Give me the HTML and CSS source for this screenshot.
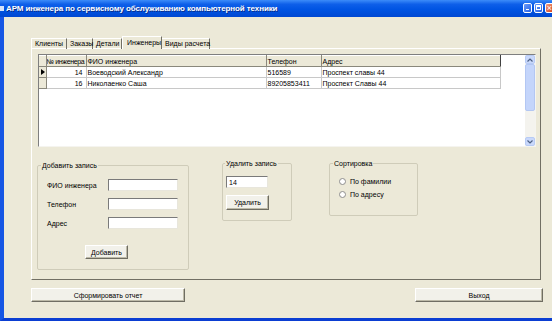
FILE: index.html
```html
<!DOCTYPE html>
<html lang="ru">
<head>
    <meta charset="UTF-8">
    <title>АРМ инженера</title>
    <link rel="stylesheet" href="styles.css">
</head>
<body>

<div class="window">
    <div class="titlebar">
        <span class="app-icon"></span>
        <span class="title">АРМ инженера по сервисному обслуживанию компьютерной техники</span>
        <div class="caption-btns">
            <span class="cap-btn cap-min"><i></i></span>
            <span class="cap-btn cap-max"><i></i></span>
            <span class="cap-btn cap-close">×</span>
        </div>
    </div>

    <div class="client">
        <!-- вкладки -->
        <div class="tabs">
            <div class="tab">Клиенты</div>
            <div class="tab">Заказы</div>
            <div class="tab">Детали</div>
            <div class="tab active">Инженеры</div>
            <div class="tab">Виды расчета</div>
        </div>

        <div class="panel">
            <div class="grid">
                <div class="grid-body">
                    <table>
                        <colgroup>
                            <col class="c-ind"><col class="c-num"><col class="c-fio"><col class="c-tel"><col class="c-addr">
                        </colgroup>
                        <tr class="head">
                            <th class="ind"></th>
                            <th class="tight">№ инженера</th>
                            <th>ФИО инженера</th>
                            <th>Телефон</th>
                            <th class="last">Адрес</th>
                        </tr>
                        <tr>
                            <td class="ind"><span class="arrow"></span></td>
                            <td class="num">14</td>
                            <td>Воеводский Александр</td>
                            <td>516589</td>
                            <td>Проспект славы 44</td>
                        </tr>
                        <tr>
                            <td class="ind"></td>
                            <td class="num">16</td>
                            <td>Николаенко Саша</td>
                            <td>89205853411</td>
                            <td>Проспект Славы 44</td>
                        </tr>
                    </table>
                </div>
                <div class="scrollbar">
                    <div class="sb-btn">
                        <svg width="6" height="4" viewBox="0 0 6 4"><path d="M0.5 3.5 L3 1 L5.5 3.5" fill="none" stroke="#4d6185" stroke-width="1.2"/></svg>
                    </div>
                    <div class="sb-thumb"></div>
                    <div class="sb-track"></div>
                    <div class="sb-btn">
                        <svg width="6" height="4" viewBox="0 0 6 4"><path d="M0.5 0.5 L3 3 L5.5 0.5" fill="none" stroke="#4d6185" stroke-width="1.2"/></svg>
                    </div>
                </div>
            </div>

            <div class="groups">
                <fieldset class="group group-add">
                    <legend>Добавить запись</legend>
                    <div class="field">
                        <label>ФИО инженера</label>
                        <input type="text" class="edit">
                    </div>
                    <div class="field">
                        <label>Телефон</label>
                        <input type="text" class="edit">
                    </div>
                    <div class="field">
                        <label>Адрес</label>
                        <input type="text" class="edit">
                    </div>
                    <button class="btn btn-add">Добавить</button>
                </fieldset>

                <fieldset class="group group-del">
                    <legend>Удалить запись</legend>
                    <input type="text" class="edit edit-small" value="14">
                    <button class="btn btn-del">Удалить</button>
                </fieldset>

                <fieldset class="group group-sort">
                    <legend>Сортировка</legend>
                    <div class="radio"><span class="dot"></span>По фамилии</div>
                    <div class="radio"><span class="dot"></span>По адресу</div>
                </fieldset>
            </div>
        </div>

        <div class="footer">
            <button class="btn btn-report">Сформировать отчет</button>
            <button class="btn btn-exit">Выход</button>
        </div>
    </div>
</div>

</body>
</html>
```

FILE: styles.css
```css
body {
    margin: 0;
    font-family: "Liberation Sans", Arial, sans-serif;
    font-size: 7px;
    color: #000;
    overflow: hidden;
    background: #ece9d8;
}
.window {
    width: 552px;
    height: 321px;
    display: flex;
    flex-direction: column;
}

/* заголовок окна */
.titlebar {
    height: 17px;
    flex: none;
    display: flex;
    align-items: center;
    background: linear-gradient(#3c8cf9 0%, #0e5fe9 25%, #0054e3 55%, #0048d2 100%);
    color: #fff;
    position: relative;
}
.app-icon {
    width: 4px;
    height: 5px;
    background: #d6e4f8;
    margin-right: 2px;
}
.title {
    font-weight: bold;
    font-size: 8px;
    letter-spacing: -0.1px;
    text-shadow: 1px 1px 0 #0a2f8c;
    white-space: nowrap;
}
.caption-btns {
    position: absolute;
    left: 523px;
    top: 3px;
    display: flex;
    gap: 2px;
}
.cap-btn {
    width: 9px;
    height: 10px;
    border: 1px solid #fff;
    border-radius: 2px;
    background: linear-gradient(135deg, #6b9cf8, #2561e6);
    position: relative;
    box-sizing: border-box;
}
.cap-min i {
    position: absolute;
    left: 2px;
    bottom: 2px;
    width: 3px;
    height: 1px;
    background: #fff;
}
.cap-max i {
    position: absolute;
    left: 1px;
    top: 1px;
    width: 5px;
    height: 5px;
    border: 1px solid #fff;
    border-top-width: 2px;
    box-sizing: border-box;
}
.cap-close {
    background: linear-gradient(135deg, #f09b7e, #d7451f);
    color: #fff;
    font-size: 9px;
    line-height: 8px;
    text-align: center;
}

/* клиентская область */
.client {
    flex: 1;
    border-left: 4px solid #1656e4;
    border-bottom: 3px solid #0b3ed2;
    background: #ece9d8;
    padding: 19px 0 0 27px;
}
.tabs {
    display: flex;
    align-items: flex-end;
    height: 13px;
    position: relative;
    z-index: 1;
    margin-bottom: -1px;
}
.tab {
    height: 11px;
    line-height: 10px;
    padding: 0 3px;
    box-sizing: border-box;
    border-top: 1px solid #fff;
    border-right: 1px solid #716f64;
    white-space: nowrap;
}
.tab:nth-child(1) { width: 36px; border-left: 1px solid #fff; }
.tab:nth-child(2) { width: 26px; }
.tab:nth-child(3) { width: 29px; }
.tab:nth-child(4) { width: 40px; }
.tab:nth-child(5) { width: 48px; }
.tab.active {
    height: 13px;
    line-height: 11px;
    padding-left: 4px;
    background: #ece9d8;
    border-left: 1px solid #fff;
    border-top: 1px solid #fff;
}
.panel {
    width: 510px;
    height: 232px;
    box-sizing: border-box;
    border: 1px solid;
    border-color: #fff #716f64 #716f64 #fff;
    padding: 5px 0 0 6px;
}

/* таблица */
.grid {
    width: 498px;
    height: 93px;
    box-sizing: border-box;
    border: 1px solid;
    border-color: #7f7f7f #f5f4ef #f5f4ef #7f7f7f;
    display: flex;
    background: #fff;
}
.grid-body {
    flex: 1;
}
table {
    border-collapse: collapse;
    table-layout: fixed;
    width: 461px;
}
.c-ind { width: 7px; }
.c-num { width: 40px; }
.c-fio { width: 180px; }
.c-tel { width: 55px; }
.c-addr { width: 179px; }
th, td {
    height: 10px;
    padding: 0 1px;
    line-height: 9px;
    text-align: left;
    font-weight: normal;
    color: #000;
    white-space: nowrap;
    overflow: hidden;
    border-right: 1px solid #c8c8c8;
    border-bottom: 1px solid #c8c8c8;
}
th {
    background: #ece9d8;
    border-color: #8a887c;
    border-top: 1px solid #fff;
}
th.tight {
    letter-spacing: -0.35px;
    padding: 0;
}
th.last {
    border-right: 1px solid #404040;
}
td.ind, th.ind {
    background: #ece9d8;
    border-right: 1px solid #8a887c;
    border-bottom: 1px solid #8a887c;
    padding: 0;
}
td.num {
    text-align: right;
    padding-right: 3px;
}
.arrow {
    display: block;
    margin-left: 2px;
    width: 0;
    height: 0;
    border-left: 4px solid #000;
    border-top: 3px solid transparent;
    border-bottom: 3px solid transparent;
}
.scrollbar {
    width: 10px;
    display: flex;
    flex-direction: column;
    background: #f4f3ee;
}
.sb-btn {
    height: 9px;
    border-radius: 2px;
    background: #c9d8fb;
    border: 1px solid #b7cbf5;
    box-sizing: border-box;
    display: flex;
    align-items: center;
    justify-content: center;
}
.sb-thumb {
    height: 47px;
    background: #c4d5fb;
    border: 1px solid #b3c7f3;
    border-radius: 2px;
    box-sizing: border-box;
}
.sb-track {
    flex: 1;
}

/* группы */
.groups {
    display: flex;
    align-items: flex-start;
    margin-top: 12px;
}
.group {
    margin: 0;
    padding: 0;
    border: 1px solid #cfccb9;
    border-radius: 2px;
    box-sizing: border-box;
    min-width: 0;
}
.group legend {
    padding: 0 1px;
    line-height: 9px;
}
.group-add {
    width: 152px;
    height: 109px;
    margin: 2px 0 0 -1px;
    padding: 9px 0 0 9px;
}
.group-add legend {
    margin-left: -6px;
}
.field {
    display: flex;
    align-items: center;
    height: 12px;
    margin-bottom: 7px;
}
.field label {
    width: 61px;
}
.edit {
    width: 70px;
    height: 12px;
    box-sizing: border-box;
    padding: 0 2px;
    margin: 0;
    font: inherit;
    background: #fff;
    border: 1px solid;
    border-color: #7a7a7a #e8e6dc #e8e6dc #7a7a7a;
    outline: none;
}
.btn {
    font: inherit;
    font-size: 7px;
    color: #000;
    margin: 0;
    padding: 0;
    box-sizing: border-box;
    background: #f2f1ea;
    border: 1px solid;
    border-color: #fff #6f6d62 #6f6d62 #fff;
    box-shadow: inset -1px -1px 0 #bdbaa8;
}
.btn-add {
    width: 43px;
    height: 14px;
    margin: 9px 0 0 38px;
}
.group-del {
    width: 70px;
    height: 62px;
    margin-left: 33px;
    padding: 8px 0 0 3px;
}
.group-del legend {
    margin-left: -1px;
}
.edit-small {
    width: 42px;
    height: 12px;
    display: block;
}
.btn-del {
    display: block;
    width: 43px;
    height: 15px;
    margin-top: 7px;
}
.group-sort {
    width: 89px;
    height: 57px;
    margin-left: 37px;
    padding: 9px 0 0 9px;
}
.group-sort legend {
    margin-left: -6px;
}
.radio {
    display: flex;
    align-items: center;
    height: 9px;
    margin-bottom: 4px;
}
.dot {
    width: 7px;
    height: 7px;
    box-sizing: border-box;
    border: 1px solid #8e8e8e;
    border-radius: 50%;
    background: #fff;
    margin-right: 4px;
}

/* нижние кнопки */
.footer {
    width: 512px;
    display: flex;
    justify-content: space-between;
    margin-top: 8px;
}
.btn-report {
    width: 154px;
    height: 14px;
}
.btn-exit {
    width: 128px;
    height: 14px;
}
```
